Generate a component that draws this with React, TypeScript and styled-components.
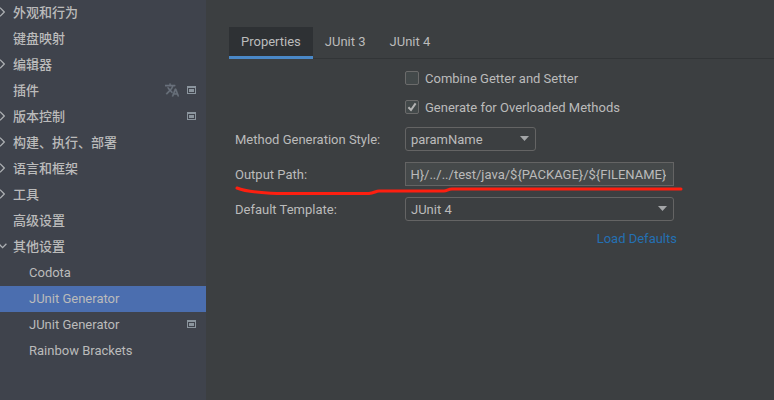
import { useEffect, useRef, useState } from "react";
import styled, { createGlobalStyle } from "styled-components";

const colors = {
  main: "#3c3f41",
  sidebar: "#3f434c",
  text: "#bbbbbb",
  selected: "#4b6eaf",
  border: "#646464",
  field: "#45494a",
  icon: "#8b959e",
};

const GlobalStyle = createGlobalStyle`
  * { box-sizing: border-box; }
  body {
    margin: 0;
    background: ${colors.main};
    color: ${colors.text};
    font: 13px/18px Roboto, "Noto Sans CJK SC", sans-serif;
  }
  button, input, select { font: inherit; color: inherit; }
`;

const Window = styled.div`
  display: flex;
  min-height: 100vh;
`;

const Sidebar = styled.nav`
  flex: 0 0 206px;
  background: ${colors.sidebar};
  overflow: hidden;
`;

const Tree = styled.ul`
  list-style: none;
  margin: 0;
  padding: 0;
`;

const TreeRow = styled.button<{ $selected?: boolean; $child?: boolean }>`
  display: flex;
  align-items: center;
  gap: 8px;
  width: 100%;
  height: 26px;
  padding: 0 10px 2px ${(p) => (p.$child ? "29px" : "0")};
  border: 0;
  text-align: left;
  white-space: nowrap;
  font-weight: ${(p) => (p.$child ? 400 : 500)};
  background: ${(p) => (p.$selected ? colors.selected : "transparent")};
`;

const ArrowSlot = styled.span`
  display: flex;
  flex: 0 0 5px;
  justify-content: flex-end;
`;

const RowLabel = styled.span`
  flex: 1;
  padding-top: 2px;
`;

const Main = styled.main`
  flex: 1;
  min-width: 0;
  padding: 27px 0 0 23px;
`;

const TabBar = styled.div`
  display: flex;
  height: 32px;
  box-shadow: inset 0 -1px 0 #323537;
`;

const Tab = styled.button<{ $active: boolean }>`
  padding: 0 12px;
  border: 0;
  border-bottom: 3px solid ${(p) => (p.$active ? "#4a88c7" : "transparent")};
  background: ${(p) => (p.$active ? "#2e3134" : "transparent")};
`;

const Form = styled.form`
  display: grid;
  grid-template-columns: 170px minmax(0, 269px);
  padding: 4px 6px;
`;

const CheckRow = styled.label`
  grid-column: 2;
  display: flex;
  align-items: center;
  gap: 6px;
  height: 29px;
`;

const CheckText = styled.span`
  padding-top: 2px;
`;

const CheckBox = styled.span`
  display: grid;
  width: 14px;
  height: 14px;
  > * { grid-area: 1 / 1; }
`;

const CheckInput = styled.input`
  appearance: none;
  margin: 0;
  width: 14px;
  height: 14px;
  border: 1px solid #6b6b6b;
  border-radius: 2px;
  background: #43494a;
  & + svg { visibility: hidden; pointer-events: none; }
  &:checked + svg { visibility: visible; }
`;

const FieldLabel = styled.label`
  display: flex;
  align-items: center;
  height: 35px;
  padding-top: 2px;
`;

const FieldCell = styled.div`
  display: flex;
  align-items: center;
  height: 35px;
`;

const SelectBox = styled.div<{ $wide?: boolean }>`
  display: grid;
  align-items: center;
  width: ${(p) => (p.$wide ? "100%" : "131px")};
  > * { grid-area: 1 / 1; }
  > svg { justify-self: end; margin-right: 7px; pointer-events: none; }
`;

const Select = styled.select`
  appearance: none;
  width: 100%;
  height: 24px;
  padding: 2px 20px 0 5px;
  border: 1px solid ${colors.border};
  border-radius: 3px;
  background: ${colors.main};
`;

const PathInput = styled.input`
  width: 100%;
  height: 24px;
  padding: 2px 7px 0 5px;
  border: 1px solid ${colors.border};
  background: ${colors.field};
`;

const PathCell = styled(FieldCell)`
  position: relative;
`;

const Underline = styled.svg`
  position: absolute;
  left: -170px;
  top: 30px;
  pointer-events: none;
`;

const Defaults = styled.a`
  grid-column: 2;
  justify-self: end;
  margin: 4px -3px 0 0;
  color: #2470b3;
  text-decoration: none;
`;

const RightArrow = () => (
  <svg width="5" height="10" viewBox="0 0 5 10" fill="none" stroke="#adb0b3" strokeWidth="1.3">
    <path d="M0 0.7 4.3 5 0 9.3" />
  </svg>
);

const DownArrow = () => (
  <svg width="5" height="6" viewBox="0 0 5 6" fill="none" stroke="#adb0b3" strokeWidth="1.3" overflow="visible">
    <path d="M-1 1 2.6 4.6 6.4 0.8" />
  </svg>
);

const ProjectIcon = () => (
  <svg width="9" height="8" viewBox="0 0 9 8" shapeRendering="crispEdges">
    <path d="M0 0h9v8H0zM1 2v5h7V2z" fill={colors.icon} fillRule="evenodd" />
    <path d="M2 3h5v3H2z" fill={colors.icon} />
  </svg>
);

const TranslateIcon = () => (
  <svg width="14" height="14" viewBox="1 1 22 22" fill="#6b727d" stroke="#6b727d" strokeWidth="0.7">
    <path d="M12.87 15.07l-2.54-2.51.03-.03A17.52 17.52 0 0 0 14.07 6H17V4h-7V2H8v2H1v2h11.17C11.5 7.92 10.44 9.75 9 11.35 8.07 10.32 7.3 9.19 6.69 8h-2c.73 1.63 1.73 3.17 2.98 4.56l-5.09 5.02L4 19l5-5 3.11 3.11.76-2.04zM18.5 10h-2L12 22h2l1.12-3h4.75L21 22h2l-4.5-12zm-2.62 7l1.62-4.33L19.12 17h-3.24z" />
  </svg>
);

const Triangle = () => (
  <svg width="9" height="5" viewBox="0 0 9 5">
    <path d="M0 0h9L4.5 5z" fill="#a4a6a8" />
  </svg>
);

type Node = {
  label: string;
  arrow?: "right" | "down";
  child?: boolean;
  project?: boolean;
  translate?: boolean;
};

const nodes: Node[] = [
  { label: "外观和行为", arrow: "right" },
  { label: "键盘映射" },
  { label: "编辑器", arrow: "right" },
  { label: "插件", project: true, translate: true },
  { label: "版本控制", arrow: "right", project: true },
  { label: "构建、执行、部署", arrow: "right" },
  { label: "语言和框架", arrow: "right" },
  { label: "工具", arrow: "right" },
  { label: "高级设置" },
  { label: "其他设置", arrow: "down" },
  { label: "Codota", child: true },
  { label: "JUnit Generator", child: true },
  { label: "JUnit Generator", child: true, project: true },
  { label: "Rainbow Brackets", child: true },
];

const tabs = ["Properties", "JUnit 3", "JUnit 4"];

function Check({ label, checked }: { label: string; checked?: boolean }) {
  return (
    <CheckRow>
      <CheckBox>
        <CheckInput type="checkbox" defaultChecked={checked} />
        <svg width="14" height="14" viewBox="0 0 14 14" fill="none" stroke="#b4b4b4" strokeWidth="2">
          <path d="M3.4 7.2 6 10 10.6 3.4" />
        </svg>
      </CheckBox>
      <CheckText>{label}</CheckText>
    </CheckRow>
  );
}

export default function App() {
  const [selected, setSelected] = useState(11);
  const [tab, setTab] = useState(0);
  const pathRef = useRef<HTMLInputElement>(null);

  useEffect(() => {
    const input = pathRef.current;
    if (input) input.scrollLeft = input.scrollWidth;
  }, []);

  return (
    <Window>
      <GlobalStyle />
      <Sidebar>
        <Tree>
          {nodes.map((node, i) => (
            <li key={i}>
              <TreeRow
                type="button"
                $child={node.child}
                $selected={i === selected}
                onClick={() => setSelected(i)}
              >
                {!node.child && (
                  <ArrowSlot>
                    {node.arrow === "right" && <RightArrow />}
                    {node.arrow === "down" && <DownArrow />}
                  </ArrowSlot>
                )}
                <RowLabel>{node.label}</RowLabel>
                {node.translate && <TranslateIcon />}
                {node.project && <ProjectIcon />}
              </TreeRow>
            </li>
          ))}
        </Tree>
      </Sidebar>
      <Main>
        <TabBar role="tablist">
          {tabs.map((name, i) => (
            <Tab key={name} type="button" role="tab" aria-selected={i === tab} $active={i === tab} onClick={() => setTab(i)}>
              {name}
            </Tab>
          ))}
        </TabBar>
        <Form onSubmit={(e) => e.preventDefault()}>
          <Check label="Combine Getter and Setter" />
          <Check label="Generate for Overloaded Methods" checked />
          <FieldLabel htmlFor="style">Method Generation Style:</FieldLabel>
          <FieldCell>
            <SelectBox>
              <Select id="style" defaultValue="paramName">
                <option>paramName</option>
              </Select>
              <Triangle />
            </SelectBox>
          </FieldCell>
          <FieldLabel htmlFor="path">Output Path:</FieldLabel>
          <PathCell>
            <PathInput
              id="path"
              ref={pathRef}
              defaultValue="${SOURCEPATH}/../../test/java/${PACKAGE}/${FILENAME}"
            />
            <Underline width="450" height="12" viewBox="0 0 450 12" fill="none" stroke="#fd1f10" strokeWidth="3" strokeLinecap="round" strokeLinejoin="round">
              <path d="M2 2C12 6 28 7 42 7.500H134C139 7 141 5 144 5H209C212 5 213 3 217 3H446" />
            </Underline>
          </PathCell>
          <FieldLabel htmlFor="template">Default Template:</FieldLabel>
          <FieldCell>
            <SelectBox $wide>
              <Select id="template" defaultValue="JUnit 4">
                <option>JUnit 3</option>
                <option>JUnit 4</option>
              </Select>
              <Triangle />
            </SelectBox>
          </FieldCell>
          <Defaults href="#defaults">Load Defaults</Defaults>
        </Form>
      </Main>
    </Window>
  );
}
